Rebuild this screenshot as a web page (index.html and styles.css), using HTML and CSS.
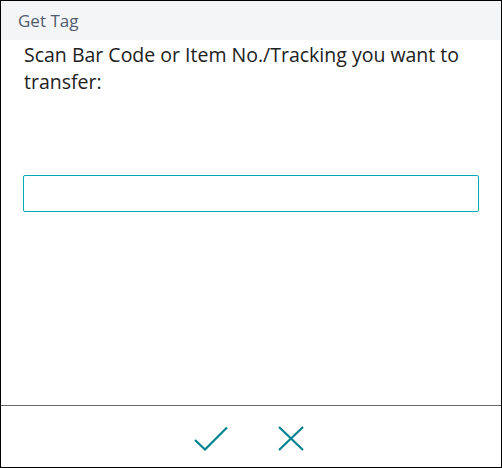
FILE: index.html
```html
<!DOCTYPE html>
<html lang="en">
<head>
  <meta charset="UTF-8" />
  <title>Get Tag</title>
  <link rel="stylesheet" href="styles.css">
</head>
<body>
  <div class="dialog">
    <header class="dialog-head">Get Tag</header>
    <main class="dialog-body">
      <p class="prompt">Scan Bar Code or Item No./Tracking you want to transfer:</p>
      <input type="text" class="scan-input" />
    </main>
    <footer class="dialog-foot">
      <button class="icon-btn" title="OK">
        <svg width="34" height="25" viewBox="0 0 34 25">
          <path d="M1 14 L11 23.5 L33 1.5" fill="none" stroke="#00838f" stroke-width="2.2" />
        </svg>
      </button>
      <button class="icon-btn" title="Cancel">
        <svg width="26" height="25" viewBox="0 0 26 25">
          <path d="M1 1 L25 24 M25 1 L1 24" fill="none" stroke="#00838f" stroke-width="2.2" />
        </svg>
      </button>
    </footer>
  </div>
</body>
</html>
```

FILE: styles.css
```css
html, body {
  margin: 0;
  height: 100%;
}
body {
  font-family: "Open Sans", "Noto Sans", sans-serif;
  background: white;
}
.dialog {
  box-sizing: border-box;
  height: 100%;
  border: 1px solid #000;
  display: flex;
  flex-direction: column;
}
.dialog-head {
  height: 39px;
  background: #f4f5f7;
  color: #505c6d;
  font-size: 17px;
  line-height: 40px;
  padding-left: 17px;
  box-sizing: border-box;
}
.dialog-body {
  flex: 1;
  padding: 0 22px;
}
.prompt {
  margin: 1px 0 0 1px;
  font-size: 19.5px;
  line-height: 27px;
  color: #212121;
}
.scan-input {
  display: block;
  box-sizing: border-box;
  width: 100%;
  height: 37px;
  margin-top: 80px;
  border: 1px solid #00a9b7;
  border-radius: 2px;
  outline: none;
}
.dialog-foot {
  height: 62px;
  border-top: 1px solid #6a6a6a;
  display: flex;
  justify-content: center;
  align-items: center;
  gap: 50px;
  padding: 3px 5px 0 0;
  box-sizing: border-box;
}
.icon-btn {
  background: none;
  border: none;
  padding: 0;
  cursor: pointer;
  display: flex;
}
```
